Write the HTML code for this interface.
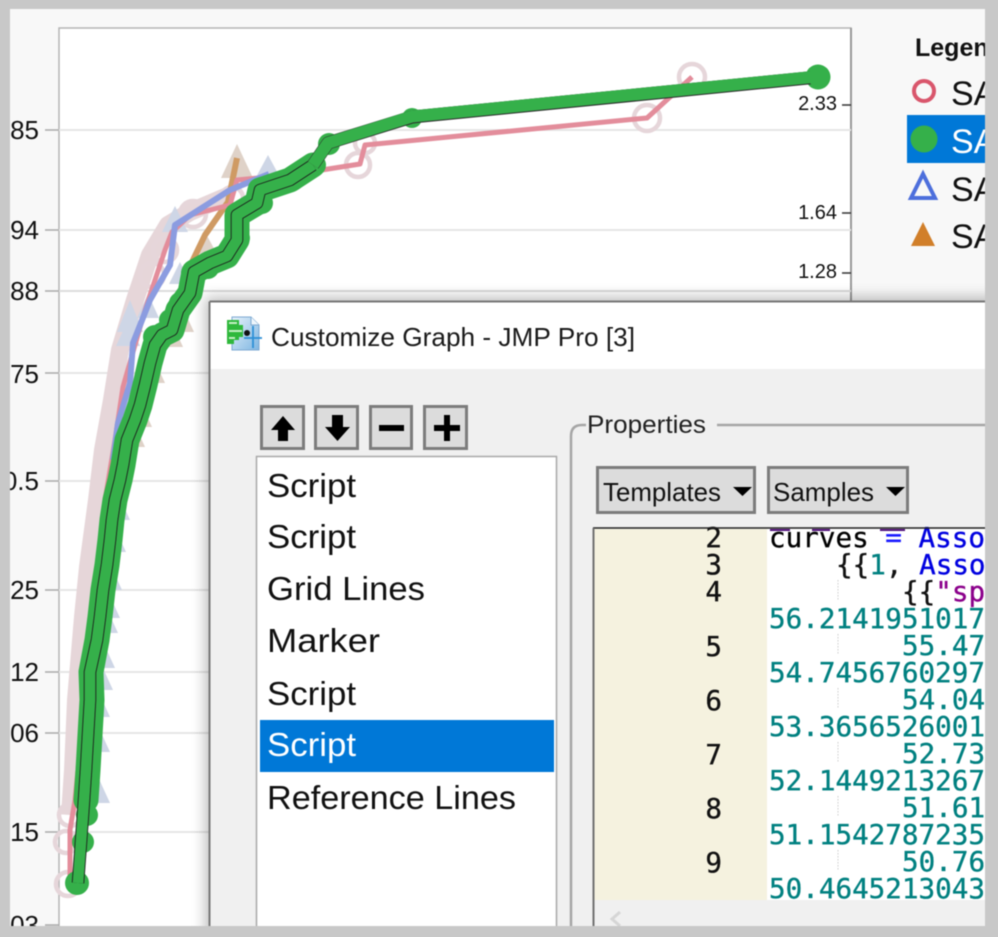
<!DOCTYPE html>
<html><head><meta charset="utf-8"><title>Customize Graph</title>
<style>
html,body{margin:0;padding:0;background:#c8c8c8}
body{width:998px;height:937px;overflow:hidden}
svg{display:block;filter:blur(.5px)}
text{font-family:"Liberation Sans",sans-serif;fill:#111}
.m{font-family:"DejaVu Sans Mono","Liberation Mono",monospace;font-size:27.6px;stroke-width:.35px}
.n{stroke:#111}
.t{fill:#008080;stroke:#008080}
</style></head><body>
<svg width="998" height="937" viewBox="0 0 998 937" xmlns="http://www.w3.org/2000/svg">
<defs>
<filter id="sh" x="-5%" y="-5%" width="110%" height="110%"><feGaussianBlur stdDeviation="7"/></filter>
<clipPath id="fr"><rect x="10" y="9" width="975" height="917"/></clipPath>
<linearGradient id="ic" x1="0" y1="0" x2="1" y2="1"><stop offset="0" stop-color="#e6f1fa"/><stop offset="1" stop-color="#7fb6e2"/></linearGradient>
</defs>
<rect width="998" height="937" fill="#c8c8c8"/>
<g clip-path="url(#fr)">
<rect x="10" y="9" width="975" height="918" fill="#f8f8f8"/>
<rect x="59" y="28" width="792" height="900" fill="#fff" stroke="#b4b4b4" stroke-width="1.5"/>
<path d="M851 28V301" stroke="#999" stroke-width="2" fill="none"/>
<path d="M59 130H851M59 230H851M59 373H209M59 481H209M59 590H209M59 672H209M59 733H209M59 832H209" stroke="#e6e6e6" stroke-width="2" fill="none"/>
<path d="M59 291H851" stroke="#dcdcdc" stroke-width="2"/>
<path d="M45 130H59M45 230H59M45 291H59M45 373H59M45 481H59M45 590H59M45 672H59M45 733H59M45 832H59M45 925H59" stroke="#aaa" stroke-width="1.5"/>
<path d="M842 105H851M842 213H851M842 273H851" stroke="#333" stroke-width="1.5"/>
<g font-size="26" text-anchor="end">
<text x="39" y="139">85</text><text x="39" y="239">94</text><text x="39" y="300">88</text><text x="39" y="383">75</text>
<text x="39" y="490">0.5</text><text x="39" y="599">25</text><text x="39" y="681">12</text><text x="39" y="742">06</text><text x="39" y="841">15</text><text x="39" y="934">03</text>
</g>
<g font-size="20" fill="#222" text-anchor="end">
<text x="837" y="110">2.33</text><text x="837" y="219">1.64</text><text x="837" y="278">1.28</text>
</g>

<!-- pale marker bands -->
<path d="M70 815L73 770L76 700L83 617L88 567L97 500L103 450L112 400L120 350L135 300L150 255L168 225L190 212L230 195" fill="none" stroke="#e6d6d9" stroke-width="18" stroke-linejoin="round"/>
<g fill="none" stroke="#e6d6da" stroke-width="4.500">
<circle cx="68" cy="884" r="12"/><circle cx="66" cy="842" r="11"/><circle cx="70" cy="815" r="11"/><circle cx="358" cy="165" r="12"/><circle cx="365" cy="143" r="10"/>
<circle cx="647" cy="118" r="13"/><circle cx="692" cy="77" r="13"/><circle cx="193" cy="214" r="13"/><circle cx="232" cy="198" r="11"/><circle cx="165" cy="250" r="12"/><circle cx="152" cy="275" r="12"/>
</g>
<!-- pale triangles -->
<path d="M268 155l13 24h-26zM175 206l13 26h-26zM180 262l11 22h-22zM148 294l11 24h-22zM130 300l13 32h-26zM128 320l12 26h-24zM107 609l11 24h-22zM104 644l11 24h-22zM102 666l11 24h-22zM99 693l11 24h-22zM99 728l11 24h-22zM99 779l11 24h-22zM119 496l11 24h-22zM115 528l11 24h-22zM111 566l11 24h-22zM109 594l11 24h-22z" fill="#ced6e6"/>
<path d="M237 144l16 34h-32zM205 232l12 22h-24zM183 308l11 24h-22zM172 323l11 24h-22zM154 359l11 24h-22zM141 403l11 24h-22zM134 423l11 24h-22z" fill="#dfd2c8"/>
<!-- orange -->
<path d="M237 158L228 202L205 235L192 262L178 300M110 477L98 567L88 680" fill="none" stroke="#cf9a63" stroke-width="6" stroke-linejoin="round"/>
<!-- pink -->
<path d="M692 77L647 118L365 145L360 164L290 175L237 180L230 205L190 215L172 232L165 250L145 310L123 387L115 440L105 500L95 600L87 680L80 750L75 800L70 830L70 880" fill="none" stroke="#e38d9b" stroke-width="5" stroke-linejoin="round"/>
<!-- blue -->
<path d="M269 174L230 190L175 225L170 265L150 300L133 343L130 383L118 423L113 460" fill="none" stroke="#8b9ce0" stroke-width="6" stroke-linejoin="round"/>

<!-- green -->
<g fill="#35b04a">
<circle cx="818" cy="77" r="12.500"/><circle cx="412" cy="118" r="10"/><circle cx="329" cy="144" r="11"/><circle cx="315" cy="165" r="11"/><circle cx="293" cy="180" r="11"/>
<circle cx="262" cy="203" r="11"/><circle cx="263" cy="192" r="10"/><circle cx="239" cy="214" r="11"/><circle cx="240" cy="238" r="10"/><circle cx="227" cy="256" r="11"/><circle cx="208" cy="268" r="11"/><circle cx="192" cy="273" r="11"/>
<circle cx="77" cy="883" r="12"/><circle cx="83" cy="842" r="11"/><circle cx="87" cy="815" r="11"/><circle cx="87" cy="793" r="10"/>
<circle cx="155" cy="337" r="12"/><circle cx="170" cy="320" r="11"/><circle cx="180" cy="303" r="11"/>
</g>
<path d="M86 800L88 770L90 735L92 700L91 672L97 640L100 617L103 590L107 565L110 540L112 520L115 500L120 480L123 465L127 440L135 420L140 405L145 385L150 363L155 345L162 335L172 330L178 310L190 293L194 272L210 263L227 256L237 240L237 215L257 203L260 190L290 180L313 165" fill="none" stroke="#35b04a" stroke-width="25" stroke-linejoin="round" stroke-linecap="round"/>
<path d="M78 883L81 842L84 800L86 770L88 735L90 700L90 672L97 640L100 617L103 590L107 565L110 540L112 520L115 500L120 480L123 465L127 440L135 420L140 405L145 385L150 363L155 345L162 335L172 330L178 310L190 293L194 272L210 263L227 256L237 240L237 215L257 203L260 190L290 180L313 165" fill="none" stroke="#1a1a1a" stroke-width="12.500" stroke-linejoin="round"/>
<path d="M78 883L81 842L84 800L86 770L88 735L90 700L90 672L97 640L100 617L103 590L107 565L110 540L112 520L115 500L120 480L123 465L127 440L135 420L140 405L145 385L150 363L155 345L162 335L172 330L178 310L190 293L194 272L210 263L227 256L237 240L237 215L257 203L260 190L290 180L313 165" fill="none" stroke="#35b04a" stroke-width="10.800" stroke-linejoin="round"/>
<path d="M313 165L328 143L412 117L818 77" fill="none" stroke="#2a2a2a" stroke-width="13" stroke-linejoin="round"/>
<path d="M313 165L328 143L412 116.500L818 76.500" fill="none" stroke="#35b04a" stroke-width="12" stroke-linejoin="round"/>
<circle cx="818" cy="77" r="10" fill="#35b04a"/>

<!-- legend -->
<text x="915" y="56" font-size="25" font-weight="bold">Legend</text>
<circle cx="924" cy="91" r="10" fill="none" stroke="#d9566c" stroke-width="4"/>
<text x="951" y="105" font-size="34">SAMPLE</text>
<rect x="907" y="115" width="78" height="48" fill="#0078d7"/>
<circle cx="924" cy="139" r="13.500" fill="#35b04a"/>
<text x="951" y="153" font-size="34" style="fill:#fff">SAMPLE</text>
<path d="M923 174L935 198H911Z" fill="none" stroke="#4d6fdc" stroke-width="4"/>
<text x="951" y="201" font-size="34">SAMPLE</text>
<path d="M923 222L935 246H911Z" fill="#d17f2a"/>
<text x="951" y="248" font-size="34">SAMPLE</text>

<!-- dialog shadow -->
<rect x="205" y="297" width="800" height="660" fill="#000" opacity=".25" filter="url(#sh)"/>
<!-- dialog -->
<rect x="209" y="301" width="800" height="660" fill="#f0f0f0"/>
<rect x="209" y="301" width="800" height="68" fill="#fff"/>
<path d="M209.500 301.500H1000M209.500 301.500V940" stroke="#777" stroke-width="2" fill="none"/>
<!-- title icon -->
<path d="M232 317H251L259 325V350H232Z" fill="url(#ic)" stroke="#7da9d2"/>
<path d="M251 317V325H259" fill="#eef6fc" stroke="#7da9d2"/>
<path d="M227 320H239V325H243V337H239V340H234V344H227Z" fill="#2fb83c"/>
<path d="M229 323H237M229 331H242M229 338H235" stroke="#c6f0c4" stroke-width="2"/>
<circle cx="247" cy="333" r="3" fill="#111"/>
<path d="M253 326V348M244 338H262" stroke="#2c8fd6" stroke-width="1.800"/>
<text x="271" y="346" font-size="26" textLength="364" lengthAdjust="spacingAndGlyphs" style="fill:#1a1a1a">Customize Graph - JMP Pro [3]</text>

<!-- toolbar buttons -->
<g fill="#dcdcdc" stroke="#7c7c7c" stroke-width="3">
<rect x="261.500" y="406.500" width="42" height="42"/><rect x="315.500" y="406.500" width="42" height="42"/><rect x="370.500" y="406.500" width="41" height="42"/><rect x="424.500" y="406.500" width="42" height="42"/>
</g>
<path d="M283 416L295 430H288V441H278V430H271Z" fill="#000"/>
<path d="M332 415H343V427H350L337.500 441L325 427H332Z" fill="#000"/>
<rect x="379" y="425" width="25" height="6" fill="#000"/>
<path d="M444 415H450V425H460V431H450V441H444V431H434V425H444Z" fill="#000"/>

<!-- list -->
<rect x="256.500" y="456.500" width="300" height="500" fill="#fff" stroke="#a8a8a8" stroke-width="1.500"/>
<rect x="260" y="720" width="294" height="52" fill="#0078d7"/>
<g font-size="33">
<text x="267" y="497" textLength="89" lengthAdjust="spacingAndGlyphs">Script</text>
<text x="267" y="548" textLength="89" lengthAdjust="spacingAndGlyphs">Script</text>
<text x="267" y="600" textLength="158" lengthAdjust="spacingAndGlyphs">Grid Lines</text>
<text x="267" y="652" textLength="113" lengthAdjust="spacingAndGlyphs">Marker</text>
<text x="267" y="705" textLength="89" lengthAdjust="spacingAndGlyphs">Script</text>
<text x="267" y="756" textLength="89" lengthAdjust="spacingAndGlyphs" style="fill:#fff">Script</text>
<text x="267" y="809" textLength="249" lengthAdjust="spacingAndGlyphs">Reference Lines</text>
</g>

<!-- properties group -->
<path d="M571 940V436Q571 425 582 425H586M717 425H990" fill="none" stroke="#a6a6a6" stroke-width="2.500"/>
<text x="587" y="433" font-size="25" textLength="119" lengthAdjust="spacingAndGlyphs" style="fill:#222">Properties</text>

<g fill="#dcdcdc" stroke="#7c7c7c" stroke-width="3">
<rect x="597.500" y="467.500" width="157" height="45"/><rect x="768.500" y="467.500" width="139" height="45"/>
</g>
<text x="603" y="501" font-size="26" textLength="118" lengthAdjust="spacingAndGlyphs">Templates</text>
<text x="773" y="501" font-size="26" textLength="101" lengthAdjust="spacingAndGlyphs">Samples</text>
<path d="M733 487H752L742.500 496ZM886 487H905L895.500 496Z" fill="#000"/>

<!-- editor -->
<rect x="594" y="529" width="173" height="371" fill="#f5f2df"/>
<rect x="767" y="529" width="225" height="371" fill="#fff"/>
<path d="M838 580V600M838 634V654M838 688V708M838 742V762M838 796V816M838 850V870" stroke="#ccc" stroke-dasharray="1.500 1.500" fill="none"/>
<path d="M620 912L612 919L620 926" fill="none" stroke="#d6d6d6" stroke-width="3"/>
<g class="m" text-anchor="end">
<text x="722" y="547" class="m n">2</text><text x="722" y="574" class="m n">3</text><text x="722" y="601" class="m n">4</text><text x="722" y="656" class="m n">5</text><text x="722" y="710" class="m n">6</text><text x="722" y="764" class="m n">7</text><text x="722" y="818" class="m n">8</text><text x="722" y="872" class="m n">9</text>
</g>
<g class="m">
<text x="769" y="547" class="m n" style="fill:#000">curves <tspan style="fill:#1a1aff;stroke:#1a1aff">=</tspan> <tspan style="fill:#0000e0;stroke:#0000e0">Asso</tspan></text>
<text x="836" y="574" class="m n">{{<tspan style="fill:#008080;stroke:#008080">1</tspan>, <tspan style="fill:#0000e0;stroke:#0000e0">Asso</tspan></text>
<text x="902" y="601" class="m n">{{<tspan style="fill:#8b008b;stroke:#8b008b">"sp</tspan></text>
<text x="769" y="628" class="m t">56.2141951017</text>
<text x="902" y="655" class="m t">55.47</text>
<text x="769" y="682" class="m t">54.7456760297</text>
<text x="902" y="709" class="m t">54.04</text>
<text x="769" y="736" class="m t">53.3656526001</text>
<text x="902" y="763" class="m t">52.73</text>
<text x="769" y="790" class="m t">52.1449213267</text>
<text x="902" y="817" class="m t">51.61</text>
<text x="769" y="844" class="m t">51.1542787235</text>
<text x="902" y="871" class="m t">50.76</text>
<text x="769" y="898" class="m t">50.4645213043</text>
</g>
<path d="M770 530H790M812 530H830M880 530H905" stroke="#50107a" stroke-width="2"/>
<path d="M593 528H990" stroke="#222" stroke-width="1.500"/>
<path d="M593.500 528V927" stroke="#707070" stroke-width="2"/>
</g>
<rect x="985" width="13" height="937" fill="#c8c8c8"/>
<rect y="926" width="998" height="11" fill="#c8c8c8"/>
</svg>
</body></html>
